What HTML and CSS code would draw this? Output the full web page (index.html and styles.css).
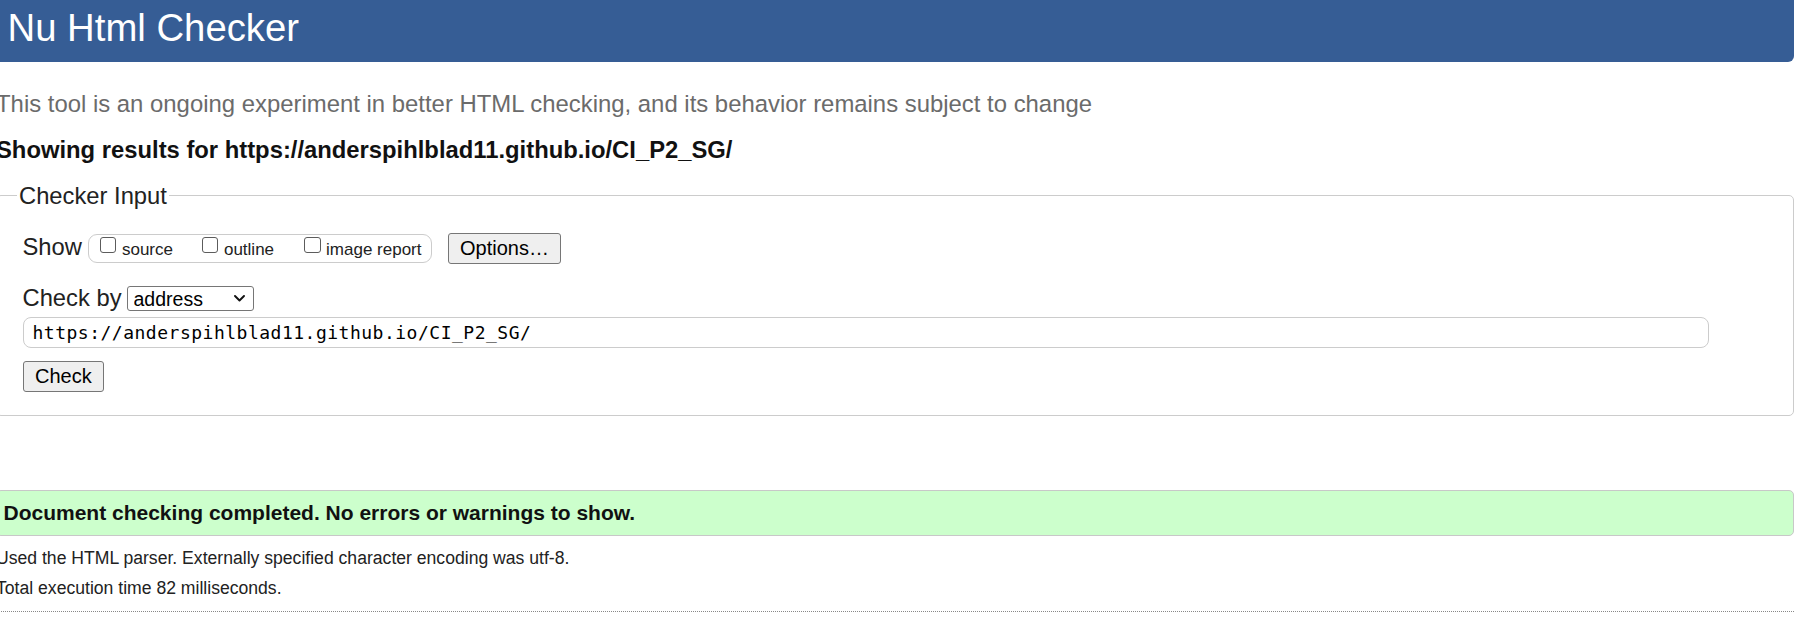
FILE: index.html
```html
<!DOCTYPE html>
<html lang="en">
<head>
<meta charset="utf-8">
<title>Nu Html Checker</title>
<link rel="stylesheet" href="styles.css">
</head>
<body>
<div class="page">
  <h1 class="title">Nu Html Checker</h1>
  <p class="intro">This tool is an ongoing experiment in better HTML checking, and its behavior remains subject to change</p>
  <p class="showing">Showing results for https://anderspihlblad11.github.io/CI_P2_SG/</p>
  <fieldset class="checker">
    <legend class="legend">Checker Input</legend>
    <div class="row show-row">
      <span class="lbl">Show</span>
      <span class="pill">
        <label class="opt"><input type="checkbox" class="cb">source</label><label class="opt"><input type="checkbox" class="cb">outline</label><label class="opt"><input type="checkbox" class="cb">image report</label>
      </span>
      <button class="btn options">Options…</button>
    </div>
    <div class="row by-row">
      <span class="lbl">Check by</span>
      <span class="selwrap">
        <select class="sel"><option>address</option></select>
        <svg class="chev" width="11" height="7" viewBox="0 0 11 7" aria-hidden="true"><path d="M1 1 L5.5 5.5 L10 1" fill="none" stroke="#111" stroke-width="1.9" stroke-linecap="round" stroke-linejoin="round"/></svg>
      </span>
    </div>
    <input class="url" type="text" value="https://anderspihlblad11.github.io/CI_P2_SG/">
    <button class="btn check">Check</button>
  </fieldset>
  <div class="ok">Document checking completed. No errors or warnings to show.</div>
  <p class="details first">Used the HTML parser. Externally specified character encoding was utf-8.</p>
  <p class="details">Total execution time 82 milliseconds.</p>
  <div class="rule"></div>
</div>
</body>
</html>
```

FILE: styles.css
```css
* { box-sizing: border-box; }
html, body { margin: 0; padding: 0; background: #fff; }
body {
  font-family: "Liberation Sans", Arial, sans-serif;
  color: #222;
  overflow: hidden;
}
.page { margin: 0 7px 0 -4px; }

.title {
  margin: 0 0 0 -6px;
  padding: 6px 0 12px 17.5px;
  background: #365d95;
  color: #fff;
  font-weight: normal;
  font-size: 38.3px;
  line-height: 44px;
  border-radius: 0 0 6px 6px;
}
.intro {
  margin: 28px 0 0;
  font-size: 23.9px;
  line-height: 27px;
  color: #6b6b6b;
}
.showing {
  margin: 19px 0 0;
  font-size: 23.8px;
  line-height: 27px;
  font-weight: bold;
  color: #111;
}
.checker {
  margin: 19px 0 0;
  border: 1px solid #ccc;
  border-radius: 5px;
  padding: 24px 20px 23px 25.5px;
  min-width: 0;
}
.legend {
  font-size: 23.75px;
  line-height: 27px;
  padding: 0 2px;
  margin-left: -5.5px;
  color: #222;
}
.row { display: flex; align-items: baseline; }
.lbl { font-size: 23.75px; line-height: 27px; }
.pill {
  display: inline-block;
  margin-left: 6px;
  height: 29px;
  border: 1px solid #ccc;
  border-radius: 9px;
  padding: 1.5px 9px 0 11px;
  font-size: 17px;
  line-height: 20px;
  white-space: nowrap;
}
.opt { color: #222; }
.opt + .opt { margin-left: 29px; }
.opt + .opt + .opt { margin-left: 30px; }
.cb {
  -webkit-appearance: none;
  appearance: none;
  display: inline-block;
  width: 16.5px;
  height: 16.5px;
  margin: 0 5.5px 1.7px 0;
  vertical-align: baseline;
  border: 1.3px solid #5c5c5c;
  border-radius: 3px;
  background: #fff;
}
.btn {
  font-family: "Liberation Sans", Arial, sans-serif;
  font-size: 20px;
  line-height: 23px;
  padding: 3px 11.5px;
  border: 1px solid #767676;
  border-radius: 3px;
  background: #efefef;
  color: #000;
}
.options { margin-left: 16px; }
.by-row { margin-top: 19.5px; }
.selwrap {
  position: relative;
  display: inline-block;
  margin-left: 5px;
}
.sel {
  -webkit-appearance: none;
  appearance: none;
  width: 127px;
  height: 25.5px;
  font-family: "Liberation Sans", Arial, sans-serif;
  font-size: 19.5px;
  border: 1px solid #767676;
  border-radius: 3px;
  background: #fff;
  color: #000;
  padding: 0 6px;
}
.chev {
  position: absolute;
  right: 9px;
  top: 9.5px;
  pointer-events: none;
}
.url {
  display: block;
  margin-top: 5.5px;
  width: 1686px;
  height: 31px;
  border: 1px solid #ccc;
  border-radius: 8px;
  padding: 0 9px;
  font-family: "DejaVu Sans Mono", "Liberation Mono", monospace;
  font-size: 18px;
  letter-spacing: 0.5px;
  line-height: 29px;
  color: #000;
  background: #fff;
}
.check { display: block; margin-top: 13px; }
.ok {
  margin-top: 74px;
  background: #ccffcc;
  border: 1px solid #c8c8c8;
  border-radius: 5px;
  padding: 10.5px 6.5px 9.5px;
  font-weight: bold;
  font-size: 21px;
  line-height: 24px;
  color: #111;
}
.details {
  margin: 10px 0 0;
  font-size: 17.6px;
  line-height: 20px;
  color: #222;
}
.details.first { margin-top: 12px; }
.rule {
  margin-top: 13px;
  border-top: 1px dotted #888;
}
```
